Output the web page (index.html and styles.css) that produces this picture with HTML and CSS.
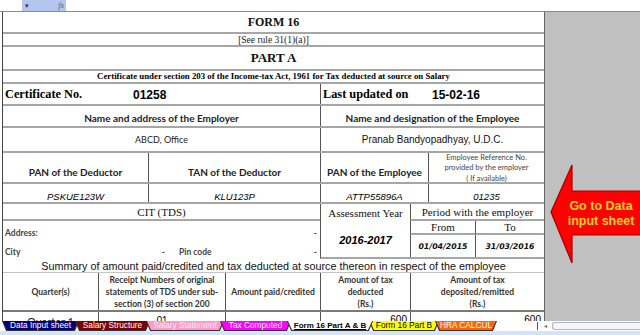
FILE: index.html
```html
<!DOCTYPE html>
<html>
<head>
<meta charset="utf-8">
<title>Form 16</title>
<link rel="stylesheet" href="styles.css">
</head>
<body>
<div class="app">
  <div class="topbar">
    <div class="namebox"><span class="dd">&#9662;</span><span class="fx">fx</span></div>
  </div>
  <div class="main">
    <div class="sheet">
      <div class="row r-title"><div class="c title">FORM 16</div></div>
      <div class="row r-rule"><div class="c rule">[See rule 31(1)(a)]</div></div>
      <div class="row r-part"><div class="c title part">PART A</div></div>
      <div class="row r-cert"><div class="c certline">Certificate under section 203 of the Income-tax Act, 1961 for Tax deducted at source on Salary</div></div>
      <div class="row half r-certno">
        <div class="c kv"><span class="klabel k1">Certificate No.</span><span class="kval">01258</span></div>
        <div class="c kv vl"><span class="klabel k2">Last updated on</span><span class="kval">15-02-16</span></div>
      </div>
      <div class="row half r-names">
        <div class="c hdr">Name and address of the Employer</div>
        <div class="c hdr vl">Name and designation of the Employee</div>
      </div>
      <div class="row half r-namev">
        <div class="c plain">ABCD, Office</div>
        <div class="c arial vl">Pranab Bandyopadhyay, U.D.C.</div>
      </div>
      <div class="row quad r-pan">
        <div class="c hdr">PAN of the Deductor</div>
        <div class="c hdr vl">TAN of the Deductor</div>
        <div class="c hdr vl">PAN of the Employee</div>
        <div class="c tiny vl">Employee Reference No.<br>provided by the employer<br>( If available)</div>
      </div>
      <div class="row quad r-panv">
        <div class="c ital">PSKUE123W</div>
        <div class="c ital vl">KLU123P</div>
        <div class="c ital vl">ATTP55896A</div>
        <div class="c ital vl">01235</div>
      </div>
      <div class="block">
        <div class="cit">
          <div class="c serif cithead">CIT (TDS)</div>
          <div class="addr"><span>Address:</span><span>-</span></div>
          <div class="city">
            <div class="citypart"><span>City</span><span>-</span></div>
            <div class="pinpart"><span>Pin code</span><span>-</span></div>
          </div>
        </div>
        <div class="period">
          <div class="c serif ay">Assessment Year</div>
          <div class="c serif per">Period with the employer</div>
          <div class="c year">2016-2017</div>
          <div class="c serif from">From</div>
          <div class="c serif to">To</div>
          <div class="c date d1">01/04/2015</div>
          <div class="c date d2">31/03/2016</div>
        </div>
      </div>
      <div class="row r-summary"><div class="c summary">Summary of amount paid/credited and tax deducted at source thereon in respect of the employee</div></div>
      <div class="row tbl r-thead">
        <div class="c th">Quarter(s)</div>
        <div class="c th vl">Receipt Numbers of original<br>statements of TDS under sub-<br>section (3) of section 200</div>
        <div class="c th vl">Amount paid/credited</div>
        <div class="c th vl">Amount of tax<br>deducted<br>(Rs.)</div>
        <div class="c th vl">Amount of tax<br>deposited/remitted<br>(Rs.)</div>
      </div>
      <div class="row tbl r-q1">
        <div class="c qname">Quarter 1</div>
        <div class="c qnum vl">01</div>
        <div class="c qamt vl"></div>
        <div class="c qamt vl">600</div>
        <div class="c qamt vl">600</div>
      </div>
    </div>
    <div class="side">
      <svg class="arrow" width="95" height="104" viewBox="0 0 95 104">
        <polygon points="6,49 27,2 27,28 96,28 96,72 27,72 27,100" fill="#ff0000" stroke="#a00000" stroke-width="1.2"/>
      </svg>
      <div class="arrowtext">Go to Data<br>input sheet</div>
    </div>
  </div>
  <div class="tabs">
    <div class="tab t1"><span>Data Input sheet</span></div>
    <div class="tab t2"><span>Salary Structure</span></div>
    <div class="tab t3"><span>Salary Statement</span></div>
    <div class="tab t4"><span>Tax Computed</span></div>
    <div class="tab t5"><span>Form 16 Part A &amp; B</span></div>
    <div class="tab t6"><span>Form 16 Part B</span></div>
    <div class="tab t7"><span>HRA CALCUL</span></div>
    <div class="tabgap"></div>
    <div class="splitter"></div>
    <div class="scrollleft">&#9666;</div>
    <div class="hscroll"></div>
  </div>
  <div class="status"></div>
</div>
</body>
</html>
```

FILE: styles.css
```css
* { box-sizing: border-box; }
html, body { margin: 0; padding: 0; }
body {
  width: 640px;
  height: 335px;
  overflow: hidden;
  background: #fff;
  font-family: "Liberation Sans", Arial, sans-serif;
  color: #000;
}
.app { display: flex; flex-direction: column; height: 335px; }

.topbar { height: 12px; flex: none; border-bottom: 1px solid #8a8a8a; }
.namebox {
  margin-left: 22px;
  width: 44px;
  height: 11px;
  background: #b2c6ef;
  display: flex;
  justify-content: space-between;
  align-items: center;
  padding: 0 2px 0 3px;
  font-size: 7px;
  color: #333;
}
.fx { font-family: "Liberation Serif", serif; font-style: italic; font-size: 8px; color: #555; }

.main { height: 309px; flex: none; display: flex; overflow: hidden; }
.sheet {
  width: 543px;
  flex: none;
  margin-left: 2px;
  border-left: 1px solid #444;
  border-right: 1px solid #666;
  overflow: hidden;
}
.side { flex: 1; background: #c0c0c0; position: relative; }

.row { display: grid; grid-template-columns: 541px; border-bottom: 2px solid #a6a6a6; }
.half { grid-template-columns: 317px 224px; }
.quad { grid-template-columns: 145px 172px 108px 116px; }
.tbl { grid-template-columns: 95px 127px 95px 90px 134px; }

.c {
  display: flex;
  align-items: center;
  justify-content: center;
  overflow: hidden;
  white-space: nowrap;
}
.vl { border-left: 1px solid #555; }

.r-title { height: 22px; }
.r-rule { height: 13px; }
.r-part { height: 24px; }
.r-cert { height: 13px; }
.r-certno { height: 22px; }
.r-names { height: 22px; }
.r-namev { height: 25px; }
.r-pan { height: 31px; }
.r-panv { height: 20px; }
.r-summary { height: 14px; border-bottom: 1px solid #c4c4c4; }
.r-thead { height: 39px; border-bottom: 2px solid #7a7a7a; }
.r-q1 { height: 9px; border-bottom: none; }

.title { font-family: "Liberation Serif", serif; font-weight: bold; font-size: 12px; color: #111; }
.part { font-size: 13px; }
.rule { font-family: "Liberation Serif", serif; font-size: 9.5px; color: #222; align-items: flex-end; }
.certline { font-family: "Liberation Serif", serif; font-weight: bold; font-size: 8.8px; align-items: flex-end; padding-bottom: 1px; }

.kv { justify-content: flex-start; align-items: flex-end; padding: 0 0 2px 2px; }
.klabel { font-family: "Liberation Serif", serif; font-weight: bold; font-size: 12.3px; }
.k1 { width: 128px; }
.k2 { width: 109px; }
.kval { font-weight: bold; font-size: 12px; }

.hdr { font-family: Lato, "Liberation Sans", sans-serif; font-weight: bold; font-size: 10px; color: #222; padding-top: 3px; }
.r-pan .hdr { padding-top: 8px; }
.plain { font-family: Lato, "Liberation Sans", sans-serif; font-size: 9px; color: #222; }
.arial { font-size: 10px; color: #111; }
.tiny {
  font-family: Lato, "Liberation Sans", sans-serif;
  font-size: 7.5px;
  line-height: 10.5px;
  color: #444;
  text-align: center;
  padding-top: 2px;
}
.ital { font-style: italic; font-size: 9.5px; align-items: flex-end; padding-bottom: 0; }

.block { display: grid; grid-template-columns: 317px 224px; height: 55px; }
.cit { display: flex; flex-direction: column; }
.serif { font-family: "Liberation Serif", serif; font-size: 11px; color: #111; }
.cithead { height: 17px; border-bottom: 2px solid #a6a6a6; }
.addr, .city {
  height: 19px;
  display: flex;
  align-items: flex-end;
  padding-bottom: 2px;
  font-family: Lato, "Liberation Sans", sans-serif;
  font-weight: bold;
  font-size: 8.5px;
  color: #444;
}
.addr { justify-content: space-between; padding-left: 2px; padding-right: 3px; }
.citypart { width: 162px; display: flex; justify-content: space-between; padding-left: 2px; }
.pinpart { flex: 1; display: flex; justify-content: space-between; padding-left: 14px; padding-right: 3px; }

.period {
  display: grid;
  grid-template-columns: 89px 65px 69px;
  grid-template-rows: 17px 14px 1fr;
  border-left: 1px solid #555;
  border-bottom: 2px solid #a6a6a6;
}
.ay { grid-column: 1; grid-row: 1; }
.per { grid-column: 2 / span 2; grid-row: 1; border-left: 1px solid #555; border-bottom: 2px solid #a6a6a6; }
.year { grid-column: 1; grid-row: 2 / span 2; font-weight: bold; font-style: italic; font-size: 11px; padding-top: 1px; }
.from { grid-column: 2; grid-row: 2; border-left: 1px solid #555; border-bottom: 2px solid #a6a6a6; }
.to { grid-column: 3; grid-row: 2; border-left: 1px solid #555; border-bottom: 2px solid #a6a6a6; }
.date { font-family: "DejaVu Sans", Verdana, sans-serif; font-weight: bold; font-style: italic; font-size: 7.8px; color: #111; border-left: 1px solid #555; }
.d1 { grid-column: 2; grid-row: 3; }
.d2 { grid-column: 3; grid-row: 3; }

.summary { font-size: 10.8px; color: #111; }
.th {
  font-family: Lato, "Liberation Sans", sans-serif;
  font-weight: bold;
  font-size: 8.5px;
  line-height: 12px;
  color: #333;
  text-align: center;
}
.r-q1 .c { align-items: flex-start; }
.qname { font-family: Lato, "Liberation Sans", sans-serif; font-size: 11px; line-height: 11px; padding-top: 4px; color: #222; }
.qnum { font-family: Lato, "Liberation Sans", sans-serif; font-size: 9px; line-height: 9px; padding-top: 3px; }
.qamt { font-size: 10px; line-height: 10px; justify-content: flex-end; padding: 3px 3px 0 0; }

.arrow { position: absolute; left: 0; top: 151px; }
.arrowtext {
  position: absolute;
  left: 20px;
  top: 187px;
  width: 72px;
  text-align: center;
  font-weight: bold;
  font-size: 12.5px;
  line-height: 15px;
  color: #ffd21f;
}

.tabs {
  height: 10px;
  flex: none;
  display: flex;
  align-items: stretch;
  background: #fff;
  padding-left: 2px;
}
.tab {
  height: 10px;
  margin-right: -4px;
  background: #333;
  padding: 0 1px 1px 1px;
  clip-path: polygon(0 0, 100% 0, calc(100% - 4px) 100%, 4px 100%);
  font-size: 8.3px;
  line-height: 9px;
  text-align: center;
  flex: none;
}
.tab span {
  display: block;
  height: 100%;
  clip-path: polygon(0 0, 100% 0, calc(100% - 4px) 100%, 4px 100%);
  color: #fff;
}
.t1 { width: 77px; }
.t1 span { background: #00007c; }
.t2 { width: 75px; }
.t2 span { background: #800000; }
.t3 { width: 78px; }
.t3 span { background: #ff99cc; color: #f4f4f4; }
.t4 { width: 71px; }
.t4 span { background: #ff00ff; }
.t5 { width: 86px; position: relative; z-index: 2; font-size: 8px; }
.t5 span { background: #fff; color: #000; font-weight: bold; text-decoration: underline; }
.t6 { width: 70px; }
.t6 span { background: #ffff00; color: #000; }
.t7 { width: 62px; }
.t7 span { background: #ff6600; }
.tabgap { flex: 1; }
.splitter { width: 1px; margin: 1px 6px 1px 0; background: #555; }
.scrollleft { width: 8px; font-size: 6px; line-height: 10px; color: #666; }
.hscroll {
  width: 88px;
  margin: 1px 0;
  border: 1px solid #a9b4c4;
  border-right: none;
  border-radius: 3px 0 0 3px;
  background: #f4f6f9;
}
.status { height: 4px; flex: none; background: #d6e3f5; }
```
